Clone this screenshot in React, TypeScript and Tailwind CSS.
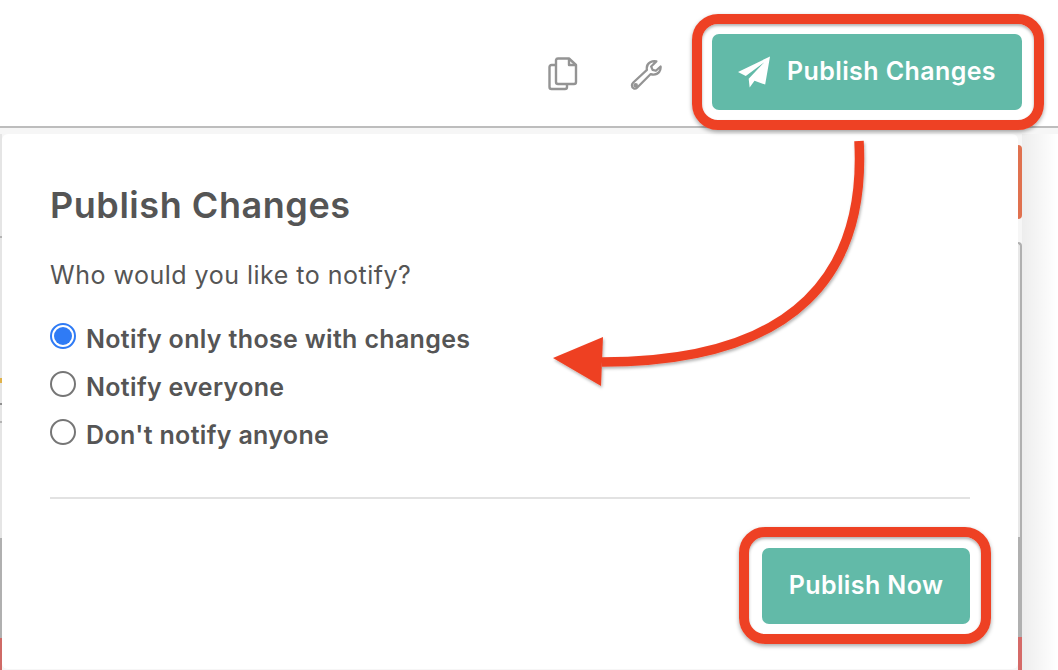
function Arrow() {
  return (
    <svg className="absolute left-0 top-0 pointer-events-none" width="1058" height="670" fill="none">
      <defs>
        <filter id="arrow-shadow" x="-10%" y="-10%" width="120%" height="120%">
          <feDropShadow dx="1" dy="2" stdDeviation="1.5" floodColor="#000" floodOpacity="0.3" />
        </filter>
      </defs>
      <g filter="url(#arrow-shadow)">
        <path d="M859 141C866 270 800 362 602 362" stroke="#ee4124" strokeWidth="9.5" />
        <path d="M553 358L603 337L601 386Z" fill="#ee4124" />
      </g>
    </svg>
  );
}

function Highlight({ className }: { className: string }) {
  return (
    <div
      className={`absolute rounded-[26px] border-[10px] border-[#ee4124] shadow-[0_2px_4px_rgba(0,0,0,0.35),inset_0_2px_3px_rgba(0,0,0,0.3)] ${className}`}
    />
  );
}

function PublishButton({ className, children }: { className: string; children: React.ReactNode }) {
  return (
    <button className={`flex items-center justify-center rounded-[7px] bg-[#62baa8] font-semibold text-[25px] tracking-[0.4px] text-white ${className}`}>
      {children}
    </button>
  );
}

function Radio({ label, checked }: { label: string; checked?: boolean }) {
  return (
    <label className="flex h-12 items-center gap-[10px] font-semibold text-[25px] tracking-[0.33px] text-[#555]">
      {checked ? (
        <span className="mb-[8px] flex h-[26px] w-[26px] items-center justify-center rounded-full border-2 border-[#2f7bf5]">
          <span className="h-[18px] w-[18px] rounded-full bg-[#2f7bf5]" />
        </span>
      ) : (
        <span className="mb-[8px] h-[26px] w-[26px] rounded-full border-2 border-[#767676]" />
      )}
      {label}
    </label>
  );
}

export default function App() {
  return (
    <div className="relative flex h-[670px] w-[1058px] flex-col overflow-hidden bg-white font-['Inter',sans-serif]">
      <header className="flex h-[128px] shrink-0 items-start justify-end border-b-2 border-[#bdbdbd] pr-[36px] pt-[34px]">
        <svg className="mr-[52px] mt-[23px]" width="30" height="34" viewBox="0 0 30 34" fill="none" stroke="#949494" strokeWidth="2.4" strokeLinejoin="round">
          <path d="M8 8H3.500A2 2 0 0 0 1.500 10V30A2 2 0 0 0 3.500 32H17A2 2 0 0 0 19 30V27" />
          <path d="M8 3A2 2 0 0 1 10 1.500H21L28 8V25A2 2 0 0 1 26 27H10A2 2 0 0 1 8 25Z" />
          <path d="M21 1.500V8H28" />
        </svg>
        <svg className="mr-[50px] mt-[25px]" width="32" height="32" viewBox="0 0 34 34" fill="none" stroke="#949494" strokeWidth="2.4" strokeLinejoin="round">
          <path d="M21.500 3.500C25 1.500 28 2.500 28 2.500L22.500 8L24 11.500L27.500 12.500L32.500 8C33 12 30.500 16.500 25 16.500C23.500 16.500 22 16 22 16L7.500 30.500C5.500 32.500 2 31.500 2 28C2 27 2.500 26 3.500 25L18 11.500C17.500 9 18 5.500 21.500 3.500Z" />
          <circle cx="6" cy="28" r="1.300" />
        </svg>
        <PublishButton className="h-[76px] w-[310px] gap-[16px]">
          <svg width="33" height="32" viewBox="0 0 34 32" fill="#fff">
            <path d="M33 0L28 29L17 25L12 32L11 23L27 6L8 20L0 16Z" />
          </svg>
          Publish Changes
        </PublishButton>
      </header>

      <div className="flex min-h-0 flex-1 bg-[#f6f6f6] pt-[6px]">
        <div className="flex w-[2px] shrink-0 flex-col bg-[#e5e5e5]">
          <div className="mt-[102px] h-[2px] bg-[#b4b4b4]" />
          <div className="mt-[140px] h-[5px] bg-[#e0b24a]" />
          <div className="mt-[20px] h-[2px] bg-[#8f8f8f]" />
          <div className="mt-[16px] h-[2px] bg-[#b4b4b4]" />
          <div className="mt-[115px] h-[100px] bg-[#b0b0b0]" />
          <div className="h-[32px] bg-[#cf6a66]" />
        </div>

        <div className="h-[535px] w-[1016px] shrink-0 rounded-[6px] bg-white px-[48px] pt-[46px]">
          <h2 className="text-[36px] leading-[50px] font-semibold tracking-[0.55px] text-[#555]">Publish Changes</h2>
          <p className="mt-[22px] text-[25px] leading-[46px] tracking-[0.5px] text-[#555]">Who would you like to notify?</p>
          <div className="mt-[18px] flex flex-col">
            <Radio label="Notify only those with changes" checked />
            <Radio label="Notify everyone" />
            <Radio label="Don't notify anyone" />
          </div>
          <hr className="mt-[37px] w-[920px] border-t-2 border-[#e2e2e2]" />
          <div className="mt-[49px] flex w-[920px] justify-end">
            <PublishButton className="h-[76px] w-[208px]">Publish Now</PublishButton>
          </div>
        </div>

        <div className="flex w-[4px] shrink-0 flex-col pt-[11px]">
          <div className="h-[74px] rounded-r-[4px] bg-[#e0714f]" />
          <div className="mt-[23px] h-[295px] rounded-tr-[4px] border-r-[2px] border-t-[2px] border-[#b0b0b0] bg-[#e8e8e8]" />
          <div className="h-[100px] bg-[#b0b0b0]" />
          <div className="h-[33px] bg-[#d56a68]" />
        </div>

        <div className="flex-1 bg-gradient-to-r from-[#ededed] to-white" />
      </div>

      <Highlight className="left-[692px] top-[14px] h-[116px] w-[352px]" />
      <Highlight className="left-[739px] top-[527px] h-[117px] w-[252px]" />
      <Arrow />
    </div>
  );
}
